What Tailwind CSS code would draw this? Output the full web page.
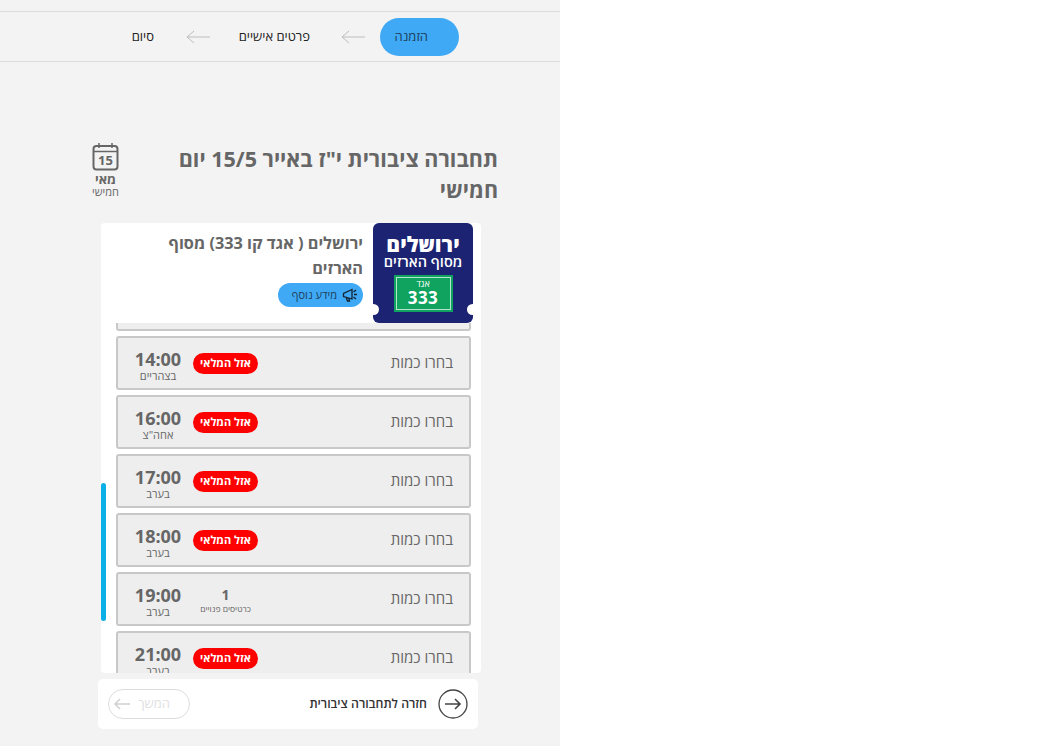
<!DOCTYPE html>
<html lang="he" dir="rtl">
<head>
    <meta charset="UTF-8">
    <meta name="viewport" content="width=device-width, initial-scale=1.0">
    <script src="https://cdn.jsdelivr.net/npm/@tailwindcss/browser@4"></script>
    <title>תחבורה ציבורית</title>
</head>
<body class="bg-white h-[746px] overflow-hidden font-['Open_Sans','DejaVu_Sans',sans-serif]">
    <div dir="ltr" class="flex h-[746px]">
        <main dir="rtl" class="w-[560px] h-[746px] bg-[#f3f3f3] pt-[11px]">
            <!-- steps -->
            <nav class="h-[51px] border-y border-[#dcdcdc] flex items-center text-[13px] text-[#222] whitespace-nowrap">
                <div class="w-[79px] h-[38px] mr-[101px] rounded-[19px] bg-[#3fa9f5] flex items-center pr-[31px] text-[#1d3f5c]">הזמנה</div>
                <svg class="mr-[15px] ml-[31px]" width="24" height="14" viewBox="0 0 24 14" fill="none" stroke="#bdbdbd"><path d="M24 7H1M8 1 1 7l7 6"/></svg>
                <div class="w-[71px] text-center">פרטים אישיים</div>
                <svg class="mr-[29px] ml-[32px]" width="24" height="14" viewBox="0 0 24 14" fill="none" stroke="#bdbdbd"><path d="M24 7H1M8 1 1 7l7 6"/></svg>
                <div>סיום</div>
            </nav>

            <!-- title -->
            <div class="flex mt-[81px] pr-[62px] h-[80px]">
                <h1 class="w-[340px] text-[21.500px] leading-[31px] font-bold text-[#666]">תחבורה ציבורית י"ז באייר 15/5 יום חמישי</h1>
                <div class="w-[27px] mr-[39px] -mt-[1px] flex flex-col items-center text-[#666]">
                    <svg width="27" height="29" viewBox="0 0 27 29" fill="none" stroke="#666">
                        <rect x="1.5" y="4" width="24" height="23.5" rx="3" stroke-width="2"/>
                        <path d="M1.5 9.5h24" stroke-width="1.5"/>
                        <path d="M7 1v5M20 1v5" stroke-width="1.5"/>
                        <text x="13.5" y="23" text-anchor="middle" font-size="13" font-weight="700" fill="#666" stroke="none">15</text>
                    </svg>
                    <div class="text-[13px] leading-[13px] font-bold mt-[2px] whitespace-nowrap">מאי</div>
                    <div class="text-[11px] leading-[11px] whitespace-nowrap">חמישי</div>
                </div>
            </div>

            <!-- trip card -->
            <div class="relative w-[380px] h-[450px] mr-[79px] bg-white rounded-[4px] overflow-hidden">
                <div class="flex h-[100px] pr-[8px]">
                    <div class="relative w-[100px] h-[100px] rounded-[6px] bg-[#1b2372] flex flex-col items-center text-white pt-[11px] whitespace-nowrap">
                        <div class="text-[21px] leading-[21px] font-extrabold">ירושלים</div>
                        <div class="text-[14.5px] leading-[14px] font-semibold">מסוף הארזים</div>
                        <div class="mt-[6px] w-[59px] h-[37px] bg-[#0fa35f] p-[2px]">
                            <div class="h-full border border-white/70 flex flex-col items-center">
                                <div class="text-[9px] leading-[11px]">אגד</div>
                                <div class="text-[17px] leading-[18px] font-bold tracking-[0.5px]">333</div>
                            </div>
                        </div>
                        <span class="absolute -right-[5px] top-[81px] w-[11px] h-[11px] rounded-full bg-white"></span>
                        <span class="absolute -left-[5px] top-[81px] w-[11px] h-[11px] rounded-full bg-white"></span>
                    </div>
                    <div class="w-[205px] mr-[10px] pt-[8px]">
                        <h2 class="text-[16.3px] leading-[25px] font-bold text-[#666]">ירושלים ( אגד קו 333) מסוף הארזים</h2>
                        <button class="mt-[2px] h-[24px] w-[85px] rounded-full bg-[#3fa9f5] flex items-center gap-[5px] pr-[5px] text-[11px] text-[#1d3f5c] whitespace-nowrap">
                            <svg width="16" height="14" viewBox="0 0 16 14" fill="none" stroke="#14222e" stroke-width="1.300"><path d="M10 1.500 1.500 5.500v3L10 11zM4 9l1.500 4h2L6.500 9.500"/><path d="M12 6.500h3M11.500 4l2.500-2M11.500 9l2.500 2"/></svg>
                            <span>מידע נוסף</span>
                        </button>
                    </div>
                </div>

                <!-- hours, scrolled -->
                <div class="h-[350px] overflow-hidden pr-[10px]">
                    <div class="-mt-[46px] w-[355px] flex flex-col gap-[5px]">
                        <div class="h-[54px] border-2 border-[#c8c8c8] rounded-[3px] bg-[#eeeeee]"></div>
                        <div class="h-[54px] border-2 border-[#c8c8c8] rounded-[3px] bg-[#eeeeee] flex items-center pr-[16px] text-[#666]">
                            <div class="w-[190px] text-[15px] -mt-[1px]">בחרו כמות</div>
                            <div class="w-[75px] flex justify-center"><span class="w-[65px] h-[21px] rounded-full bg-[#ff0000] text-white text-[11px] font-bold flex items-center justify-center">אזל המלאי</span></div>
                            <div class="w-[48px] mr-[6px] text-center mt-[5px]"><div class="text-[18px] leading-[20px] font-bold">14:00</div><div class="text-[11px] leading-[12px] mt-[1px]">בצהריים</div></div>
                        </div>
                        <div class="h-[54px] border-2 border-[#c8c8c8] rounded-[3px] bg-[#eeeeee] flex items-center pr-[16px] text-[#666]">
                            <div class="w-[190px] text-[15px] -mt-[1px]">בחרו כמות</div>
                            <div class="w-[75px] flex justify-center"><span class="w-[65px] h-[21px] rounded-full bg-[#ff0000] text-white text-[11px] font-bold flex items-center justify-center">אזל המלאי</span></div>
                            <div class="w-[48px] mr-[6px] text-center mt-[5px]"><div class="text-[18px] leading-[20px] font-bold">16:00</div><div class="text-[11px] leading-[12px] mt-[1px]">אחה"צ</div></div>
                        </div>
                        <div class="h-[54px] border-2 border-[#c8c8c8] rounded-[3px] bg-[#eeeeee] flex items-center pr-[16px] text-[#666]">
                            <div class="w-[190px] text-[15px] -mt-[1px]">בחרו כמות</div>
                            <div class="w-[75px] flex justify-center"><span class="w-[65px] h-[21px] rounded-full bg-[#ff0000] text-white text-[11px] font-bold flex items-center justify-center">אזל המלאי</span></div>
                            <div class="w-[48px] mr-[6px] text-center mt-[5px]"><div class="text-[18px] leading-[20px] font-bold">17:00</div><div class="text-[11px] leading-[12px] mt-[1px]">בערב</div></div>
                        </div>
                        <div class="h-[54px] border-2 border-[#c8c8c8] rounded-[3px] bg-[#eeeeee] flex items-center pr-[16px] text-[#666]">
                            <div class="w-[190px] text-[15px] -mt-[1px]">בחרו כמות</div>
                            <div class="w-[75px] flex justify-center"><span class="w-[65px] h-[21px] rounded-full bg-[#ff0000] text-white text-[11px] font-bold flex items-center justify-center">אזל המלאי</span></div>
                            <div class="w-[48px] mr-[6px] text-center mt-[5px]"><div class="text-[18px] leading-[20px] font-bold">18:00</div><div class="text-[11px] leading-[12px] mt-[1px]">בערב</div></div>
                        </div>
                        <div class="h-[54px] border-2 border-[#c8c8c8] rounded-[3px] bg-[#eeeeee] flex items-center pr-[16px] text-[#666]">
                            <div class="w-[190px] text-[15px] -mt-[1px]">בחרו כמות</div>
                            <div class="w-[75px] flex flex-col items-center mt-[1px]"><span class="text-[14px] leading-[17px] font-bold">1</span><span class="text-[8.500px] leading-[11px] whitespace-nowrap">כרטיסים פנויים</span></div>
                            <div class="w-[48px] mr-[6px] text-center mt-[5px]"><div class="text-[18px] leading-[20px] font-bold">19:00</div><div class="text-[11px] leading-[12px] mt-[1px]">בערב</div></div>
                        </div>
                        <div class="h-[54px] border-2 border-[#c8c8c8] rounded-[3px] bg-[#eeeeee] flex items-center pr-[16px] text-[#666]">
                            <div class="w-[190px] text-[15px] -mt-[1px]">בחרו כמות</div>
                            <div class="w-[75px] flex justify-center"><span class="w-[65px] h-[21px] rounded-full bg-[#ff0000] text-white text-[11px] font-bold flex items-center justify-center">אזל המלאי</span></div>
                            <div class="w-[48px] mr-[6px] text-center mt-[5px]"><div class="text-[18px] leading-[20px] font-bold">21:00</div><div class="text-[11px] leading-[12px] mt-[1px]">בערב</div></div>
                        </div>
                    </div>
                </div>
                <!-- scrollbar -->
                <div class="absolute left-0 top-[260px] w-[5px] h-[138px] rounded-full bg-[#0bb0e6]"></div>
            </div>

            <!-- footer -->
            <div class="w-[380px] h-[50px] mr-[82px] mt-[6px] rounded-[5px] bg-white flex items-center pr-[10px] pl-[10px] justify-between">
                <div class="flex items-center gap-[11px] text-[12.3px] font-semibold text-[#333]">
                    <svg width="30" height="30" viewBox="0 0 30 30" fill="none" stroke="#444" stroke-width="1.300"><circle cx="15" cy="15" r="14"/><path d="M7 15h15M17 10l5 5-5 5" stroke-width="1.600"/></svg>
                    <span>חזרה לתחבורה ציבורית</span>
                </div>
                <button class="w-[82px] h-[30px] rounded-full border border-[#dddddd] bg-white flex items-center justify-between px-[5px] text-[13px] text-[#e0e0e0]">
                    <span class="mr-[14px]">המשך</span>
                    <svg width="16" height="12" viewBox="0 0 16 12" fill="none" stroke="#d0d0d0" stroke-width="1.500"><path d="M16 6H1M6 1 1 6l5 5"/></svg>
                </button>
            </div>
        </main>
        <div class="flex-1 bg-white"></div>
    </div>
</body>
</html>
